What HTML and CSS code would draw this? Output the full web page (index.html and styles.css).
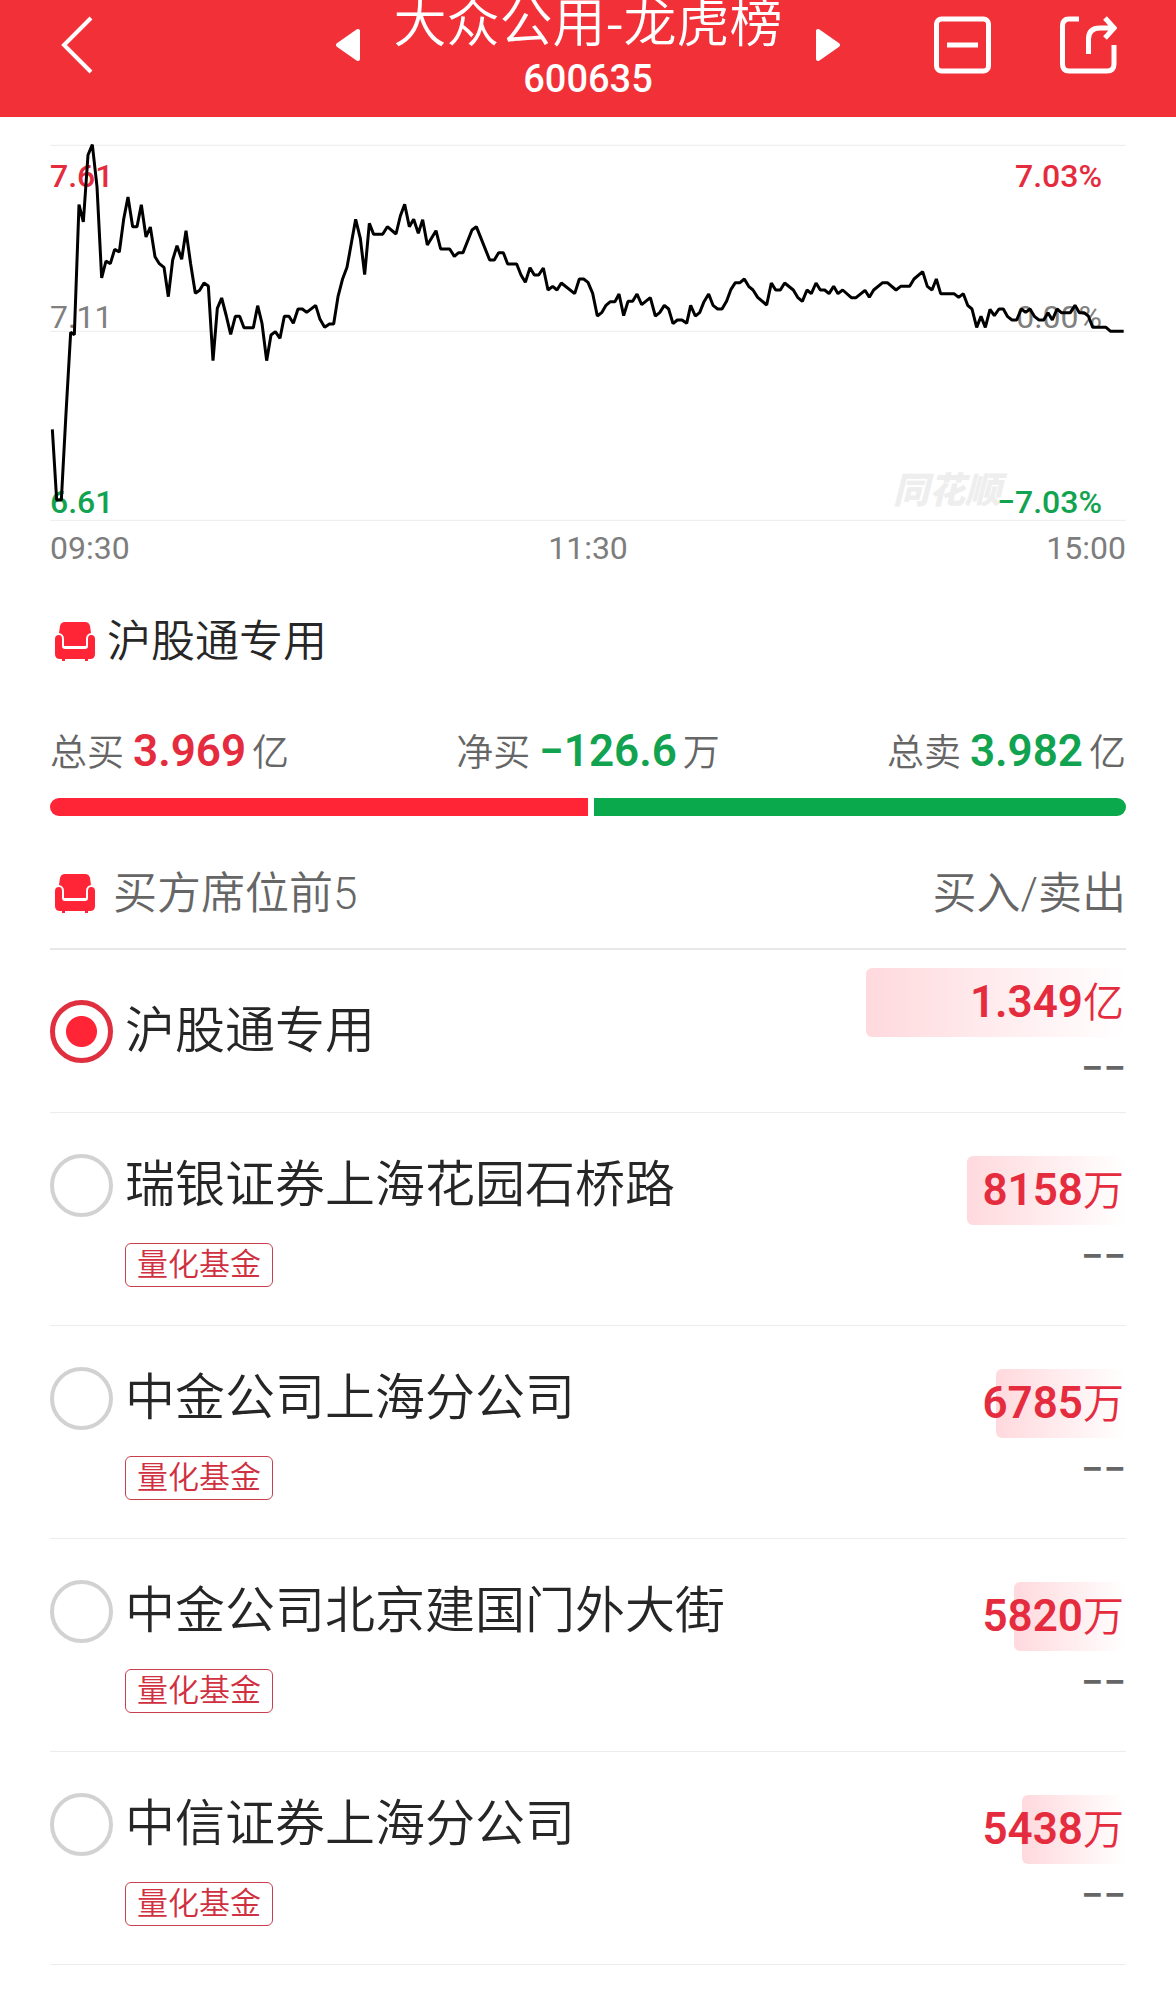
FILE: index.html
```html
<!DOCTYPE html>
<html lang="zh-CN">
<head>
  <meta charset="UTF-8" />
  <meta name="viewport" content="width=device-width, initial-scale=1.0" />
  <title>大众公用-龙虎榜</title>
  <link rel="stylesheet" href="styles.css">
</head>
<body>
  <header class="topbar">
    <button class="icon-btn" aria-label="返回">
      <svg width="34" height="58" viewBox="0 0 34 58"><path d="M32 2 L5 29 L32 56" fill="none" stroke="#fff" stroke-width="4" /></svg>
    </button>
    <div class="stock">
      <button class="icon-btn" aria-label="上一只">
        <svg width="26" height="34" viewBox="0 0 26 34"><path d="M3 17 L23 3 V31 Z" fill="#fff" stroke="#fff" stroke-width="4" stroke-linejoin="round" /></svg>
      </button>
      <div class="stock-title">
        <h1>大众公用-龙虎榜</h1>
        <p>600635</p>
      </div>
      <button class="icon-btn" aria-label="下一只">
        <svg width="26" height="34" viewBox="0 0 26 34"><path d="M23 17 L3 3 V31 Z" fill="#fff" stroke="#fff" stroke-width="4" stroke-linejoin="round" /></svg>
      </button>
    </div>
    <div class="actions">
      <button class="icon-btn" aria-label="移除自选">
        <svg width="57" height="58" viewBox="0 0 57 58" fill="none" stroke="#fff" stroke-width="5"><rect x="2.500" y="3" width="52" height="52" rx="5" /><path d="M13 29 H44" /></svg>
      </button>
      <button class="icon-btn" aria-label="分享">
        <svg width="57" height="58" viewBox="0 0 57 58" fill="none" stroke="#fff" stroke-width="5">
          <path d="M19 3 H9 Q2.500 3 2.500 10 V48 Q2.500 55 9 55 H47 Q54 55 54 48 V29" />
          <path d="M28.500 38 V23 Q28.500 12 40 12 H53 M45 2 L54 12 L45 22" />
        </svg>
      </button>
    </div>
  </header>

  <main>
    <section class="chart">
      <span class="watermark">同花顺</span>
      <span class="mark left top up">7.61</span>
      <span class="mark left mid">7.11</span>
      <span class="mark left low down">6.61</span>
      <span class="mark right top up">7.03%</span>
      <span class="mark right mid">0.00%</span>
      <span class="mark right low down">−7.03%</span>
      <svg class="plot" viewBox="0 45 3228 1128" preserveAspectRatio="none">
        <path class="grid-line" d="M0 46 H3228 M0 604 H3228 M0 1171 H3228" />
        <polyline class="price" points="
          7,898 20,1110 34,1110 48,850 62,607 73,614 87,224 100,276 114,75 127,44 141,170 155,444 168,393 181,401
          194,358 208,366 221,268 234,201 248,290 261,290 274,224 288,321 301,291 315,380 328,401 342,412 355,500
          368,390 381,347 395,388 408,302 422,402 436,490 449,481 462,459 475,468 489,692 502,535 515,504 529,558
          542,613 556,559 569,559 582,593 610,593 623,527 636,580 650,692 663,615 676,605 690,625 703,559 717,559
          730,580 744,537 757,537 770,547 797,526 810,568 824,592 838,582 851,582 864,500 878,446 891,412 904,340
          917,268 931,325 944,434 958,280 971,313 998,313 1012,290 1038,312 1051,258 1064,223 1078,290 1091,268
          1105,310 1118,269 1132,345 1158,302 1172,357 1199,357 1213,379 1226,368 1239,368 1266,300 1279,290
          1319,390 1333,390 1346,368 1360,368 1373,402 1400,402 1413,435 1426,457 1440,413 1453,435 1466,435
          1480,414 1494,480 1508,469 1521,480 1534,459 1574,491 1588,447 1601,447 1614,457 1628,490 1642,558
          1655,548 1668,526 1681,515 1695,515 1707,492 1721,557 1734,514 1748,514 1761,492 1775,524 1801,503
          1816,558 1829,548 1843,526 1856,537 1869,581 1882,570 1896,570 1910,580 1922,526 1936,558 1949,548
          1962,515 1976,492 1989,526 2003,537 2016,537 2030,513 2043,478 2056,458 2070,458 2083,447 2096,469
          2109,480 2123,502 2150,525 2164,459 2177,480 2191,480 2204,459 2230,480 2243,502 2257,514 2271,480
          2284,491 2298,459 2311,480 2324,480 2337,491 2351,469 2364,491 2378,480 2404,503 2418,503 2445,481
          2458,502 2471,480 2498,458 2512,458 2538,480 2552,469 2579,469 2592,447 2618,425 2632,469 2646,480
          2659,447 2672,491 2712,491 2726,502 2740,491 2753,526 2766,537 2780,592 2793,559 2806,592 2820,538
          2833,557 2847,537 2860,537 2873,560 2886,570 2900,570 2914,537 2927,547 2940,537 2954,560 2967,570
          2981,570 2994,548 3007,570 3021,537 3034,548 3061,548 3075,526 3088,548 3102,548 3115,558 3128,592
          3168,592 3182,604 3221,604" />
      </svg>
    </section>
    <div class="times"><span>09:30</span><span>11:30</span><span>15:00</span></div>

    <h2 class="seat">
      <svg class="sofa" viewBox="0 0 40 40"><use href="#sofa" /></svg>
      沪股通专用
    </h2>

    <div class="totals">
      <div>总买<b class="up">3.969</b>亿</div>
      <div>净买<b class="down">−126.6</b>万</div>
      <div>总卖<b class="down">3.982</b>亿</div>
    </div>
    <div class="ratio"><i class="buy"></i><i class="sell"></i></div>

    <div class="list-head">
      <h2>
        <svg class="sofa" viewBox="0 0 40 40">
          <g id="sofa" fill="#ff2436">
            <path d="M4 11 L5 4 Q6 0 10 0 H30 Q34 0 35 4 L36 11 Q31 12 31 17 V24 H9 V17 Q9 12 4 11 Z" />
            <path d="M0 17 Q0 13 4 13 Q7 13 7 17 V24 Q7 27 10 27 H30 Q33 27 33 24 V17 Q33 13 36 13 Q40 13 40 17 V32 Q40 37 35 37 H33 V39 H30 V37 H10 V39 H7 V37 H5 Q0 37 0 32 Z" />
          </g>
        </svg>
        买方席位前5
      </h2>
      <span>买入/卖出</span>
    </div>

    <ul class="seats">
      <li>
        <label class="who"><input type="radio" name="seat" checked /><span class="name">沪股通专用</span></label>
        <div class="amount">
          <div class="bought"><i style="width: 100%"></i><span><b>1.349</b>亿</span></div>
          <div class="sold">−−</div>
        </div>
      </li>
      <li>
        <label class="who"><input type="radio" name="seat" /><span class="name">瑞银证券上海花园石桥路</span><span class="tag">量化基金</span></label>
        <div class="amount">
          <div class="bought"><i style="width: 61%"></i><span><b>8158</b>万</span></div>
          <div class="sold">−−</div>
        </div>
      </li>
      <li>
        <label class="who"><input type="radio" name="seat" /><span class="name">中金公司上海分公司</span><span class="tag">量化基金</span></label>
        <div class="amount">
          <div class="bought"><i style="width: 50%"></i><span><b>6785</b>万</span></div>
          <div class="sold">−−</div>
        </div>
      </li>
      <li>
        <label class="who"><input type="radio" name="seat" /><span class="name">中金公司北京建国门外大街</span><span class="tag">量化基金</span></label>
        <div class="amount">
          <div class="bought"><i style="width: 43%"></i><span><b>5820</b>万</span></div>
          <div class="sold">−−</div>
        </div>
      </li>
      <li>
        <label class="who"><input type="radio" name="seat" /><span class="name">中信证券上海分公司</span><span class="tag">量化基金</span></label>
        <div class="amount">
          <div class="bought"><i style="width: 40%"></i><span><b>5438</b>万</span></div>
          <div class="sold">−−</div>
        </div>
      </li>
    </ul>
  </main>
</body>
</html>
```
FILE: styles.css
```css
* {
  box-sizing: border-box;
}
body {
  margin: 0;
  background: #fff;
  color: #262626;
  font-family: Roboto, "Noto Sans CJK SC", sans-serif;
}
h1, h2, p, ul {
  margin: 0;
  padding: 0;
  font-weight: 350;
}
.icon-btn {
  display: flex;
  padding: 0;
  border: none;
  background: none;
  cursor: pointer;
}

/* top bar */
.topbar {
  display: grid;
  grid-template-columns: 1fr auto 1fr;
  align-items: center;
  height: 117px;
  padding: 0 59px 27px;
  background: #f23038;
  color: #fff;
}
.stock {
  display: flex;
  align-items: center;
  gap: 32px;
}
.stock-title {
  height: 90px;
  display: flex;
  flex-direction: column;
  justify-content: center;
  gap: 3px;
  text-align: center;
}
.stock-title h1 {
  font-family: "Noto Sans CJK SC", sans-serif;
  font-size: 53px;
  line-height: 64px;
  white-space: nowrap;
}
.stock-title p {
  font-size: 38px;
  font-weight: 500;
  line-height: 50px;
}
.actions {
  display: flex;
  justify-content: flex-end;
  gap: 69px;
}

/* chart */
main {
  padding: 0 50px 32px;
}
.chart {
  position: relative;
  height: 376px;
  margin-top: 28px;
}
.plot {
  position: absolute;
  inset: 0;
  width: 100%;
  height: 100%;
  overflow: visible;
}
.plot path, .plot polyline {
  fill: none;
  vector-effect: non-scaling-stroke;
}
.grid-line {
  stroke: #ececec;
  stroke-width: 1px;
}
.price {
  stroke: #000;
  stroke-width: 3px;
  stroke-linejoin: bevel;
}
.up {
  color: #e52c3e;
}
.down {
  color: #12a350;
}
.mark {
  position: absolute;
  font-size: 32px;
  line-height: 36px;
}
.mark:not(.up):not(.down) {
  color: #808080;
}
.mark.up, .mark.down {
  font-weight: 500;
}
.left {
  left: 0;
}
.right {
  right: 24px;
}
.top {
  top: 13px;
}
.mid {
  top: 154px;
}
.low {
  bottom: 1px;
}
.watermark {
  position: absolute;
  right: 125px;
  bottom: 10px;
  color: #eee;
  font-size: 36px;
  font-style: italic;
  font-weight: 900;
  line-height: 40px;
}
.times {
  display: flex;
  justify-content: space-between;
  margin-top: 9px;
  color: #7d7d7d;
  font-size: 32px;
  line-height: 36px;
}

/* totals */
.sofa {
  width: 40px;
  height: 40px;
}
.seat {
  display: flex;
  align-items: center;
  gap: 12px;
  height: 60px;
  margin-top: 46px;
  padding-left: 5px;
  font-size: 44px;
  line-height: 60px;
}
.totals {
  display: flex;
  justify-content: space-between;
  margin-top: 49px;
  color: #666;
  font-size: 37px;
  font-weight: 350;
  line-height: 60px;
}
.totals b {
  margin: 0 6px 0 9px;
  font-size: 44px;
  font-weight: 600;
}
.ratio {
  display: flex;
  gap: 6px;
  height: 18px;
  margin-top: 14px;
}
.buy {
  flex: 101;
  border-radius: 9px 0 0 9px;
  background: #ff2436;
}
.sell {
  flex: 100;
  border-radius: 0 9px 9px 0;
  background: #0aaa4c;
}

/* seat list */
.list-head {
  display: flex;
  justify-content: space-between;
  align-items: center;
  height: 134px;
  padding: 24px 0 0 5px;
  border-bottom: 2px solid #e8e8e8;
  color: #666;
  font-size: 44px;
  font-weight: 350;
  line-height: 60px;
}
.list-head h2 {
  display: flex;
  align-items: center;
  gap: 18px;
  font-size: 44px;
}
.seats {
  list-style: none;
}
.seats li {
  display: flex;
  justify-content: space-between;
  align-items: center;
  min-height: 213px;
  border-bottom: 1px solid #ececec;
}
.seats li:first-child {
  min-height: 163px;
}
.who {
  display: grid;
  grid-template-columns: 63px auto;
  column-gap: 12px;
  align-items: center;
}
.who input {
  appearance: none;
  width: 63px;
  height: 63px;
  margin: 0;
  border: 4px solid #d2d2d2;
  border-radius: 50%;
}
.who input:checked {
  border: 5px solid #e03040;
  background: radial-gradient(circle, #ff2436 15px, transparent 16px);
}
.name {
  font-size: 50px;
  font-weight: 350;
  line-height: 68px;
}
.tag {
  grid-column: 2;
  justify-self: start;
  margin-top: 24px;
  padding: 0 11px;
  border: 1px solid #c8404e;
  border-radius: 6px;
  color: #d0303f;
  font-size: 31px;
  line-height: 42px;
}
.amount {
  width: 260px;
  height: 126px;
}
.bought {
  position: relative;
  height: 69px;
  color: #e52c3e;
  font-size: 41px;
  font-weight: 350;
  line-height: 69px;
  text-align: right;
}
.bought i {
  position: absolute;
  top: 0;
  right: 0;
  height: 69px;
  border-radius: 6px;
  background: linear-gradient(to right, #ffd9dd, #fff);
}
.bought span {
  position: relative;
  padding-right: 2px;
}
.bought b {
  font-size: 44px;
  font-weight: 600;
}
.sold {
  color: #666;
  font-size: 40px;
  font-weight: 500;
  line-height: 64px;
  text-align: right;
}
```
